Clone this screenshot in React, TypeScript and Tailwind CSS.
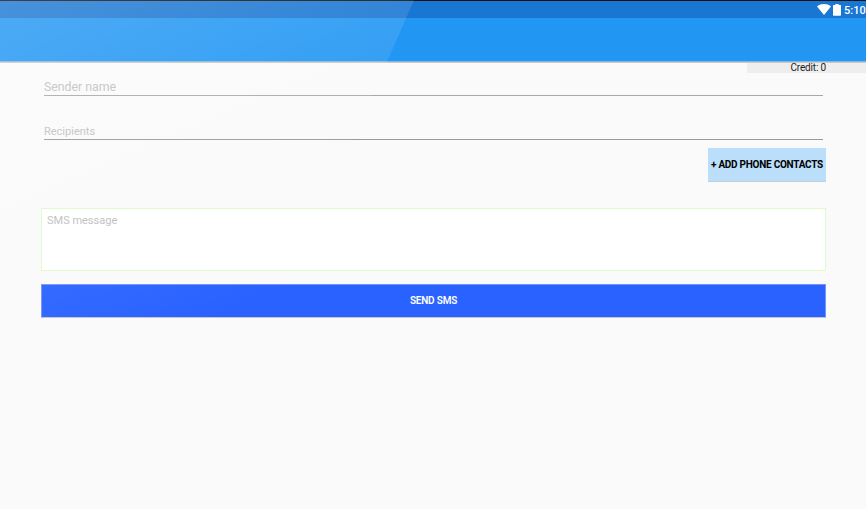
function StatusBar() {
  return (
    <div className="flex h-[18px] items-center justify-end border-t border-[#111111] bg-[#1976d2] text-white">
      <svg className="h-[11px] w-[14px]" viewBox="0 0 14 11" fill="currentColor">
        <path d="M0 2.4C4-.7 10-.7 14 2.4L7 11Z" />
      </svg>
      <svg className="mt-px ml-[2px] h-[12px] w-[8px]" viewBox="0 0 8 12" fill="currentColor">
        <path d="M2.3 0h3.4v1H7.3q.7 0 .7.7v9.4q0 .7-.7.7H.7q-.7 0-.7-.7V1.700q0-.7.7-.7h1.600z" />
      </svg>
      <span className="mt-[3px] ml-[3px] w-[22px] text-[11px] leading-[14px] font-medium whitespace-nowrap">5:10</span>
    </div>
  );
}

function Glare() {
  return (
    <svg className="pointer-events-none absolute inset-0 h-full w-full" viewBox="0 0 866 509">
      <defs>
        <linearGradient id="glare" gradientUnits="userSpaceOnUse" x1="0" y1="0" x2="150" y2="348">
          <stop offset="0" stopColor="#fff" stopOpacity="0.2" />
          <stop offset="1" stopColor="#fff" stopOpacity="0" />
        </linearGradient>
      </defs>
      <path d="M0 0H414L192 509H0Z" fill="url(#glare)" />
    </svg>
  );
}

export default function App() {
  return (
    <div className="relative flex h-[509px] w-[866px] flex-col overflow-hidden bg-[#fafafa] font-['Roboto',sans-serif]">
      <StatusBar />
      <header className="h-[43px] shrink-0 bg-[#2196f3]" />
      <div className="h-px shrink-0 bg-[#86b5d9]" />
      <div className="flex h-[11px] shrink-0 justify-end border-t border-[#c9c9c9]">
        <div className="h-[10px] w-[119px] bg-[#eeeeee] pr-[40px] text-right text-[10px] leading-[10px] tracking-[-0.15px] text-[#222222]">Credit: 0</div>
      </div>
      <main className="flex flex-col pr-[40px] pl-[41px]">
        <div className="mr-[3px] ml-[3px] flex h-[23px] items-end border-b border-[#a8a8a8] text-[12.3px] leading-[16px] text-[#c0c0c0]">Sender name</div>
        <div className="mr-[3px] ml-[3px] flex h-[44px] items-end border-b border-[#999999] text-[11px] leading-[15px] text-[#c0c0c0]">Recipients</div>
        <button className="mt-[8px] h-[33px] w-[118px] self-end bg-[#bbdefb] text-[10px] font-bold tracking-[-0.25px] whitespace-nowrap text-black shadow-[0_1px_0_#c9ced2]">+ ADD PHONE CONTACTS</button>
        <div className="mt-[27px] h-[63px] border border-[#e1f8c8] bg-white pt-[4px] pl-[5px] text-[11px] leading-[15px] text-[#bdbdbd]">SMS message</div>
        <button className="mt-[13px] h-[34px] border border-[#7595f5] border-b-[#c3c7d3] bg-[#2962ff] pb-px text-[10px] font-semibold tracking-[-0.2px] text-white">SEND SMS</button>
      </main>
      <Glare />
    </div>
  );
}
